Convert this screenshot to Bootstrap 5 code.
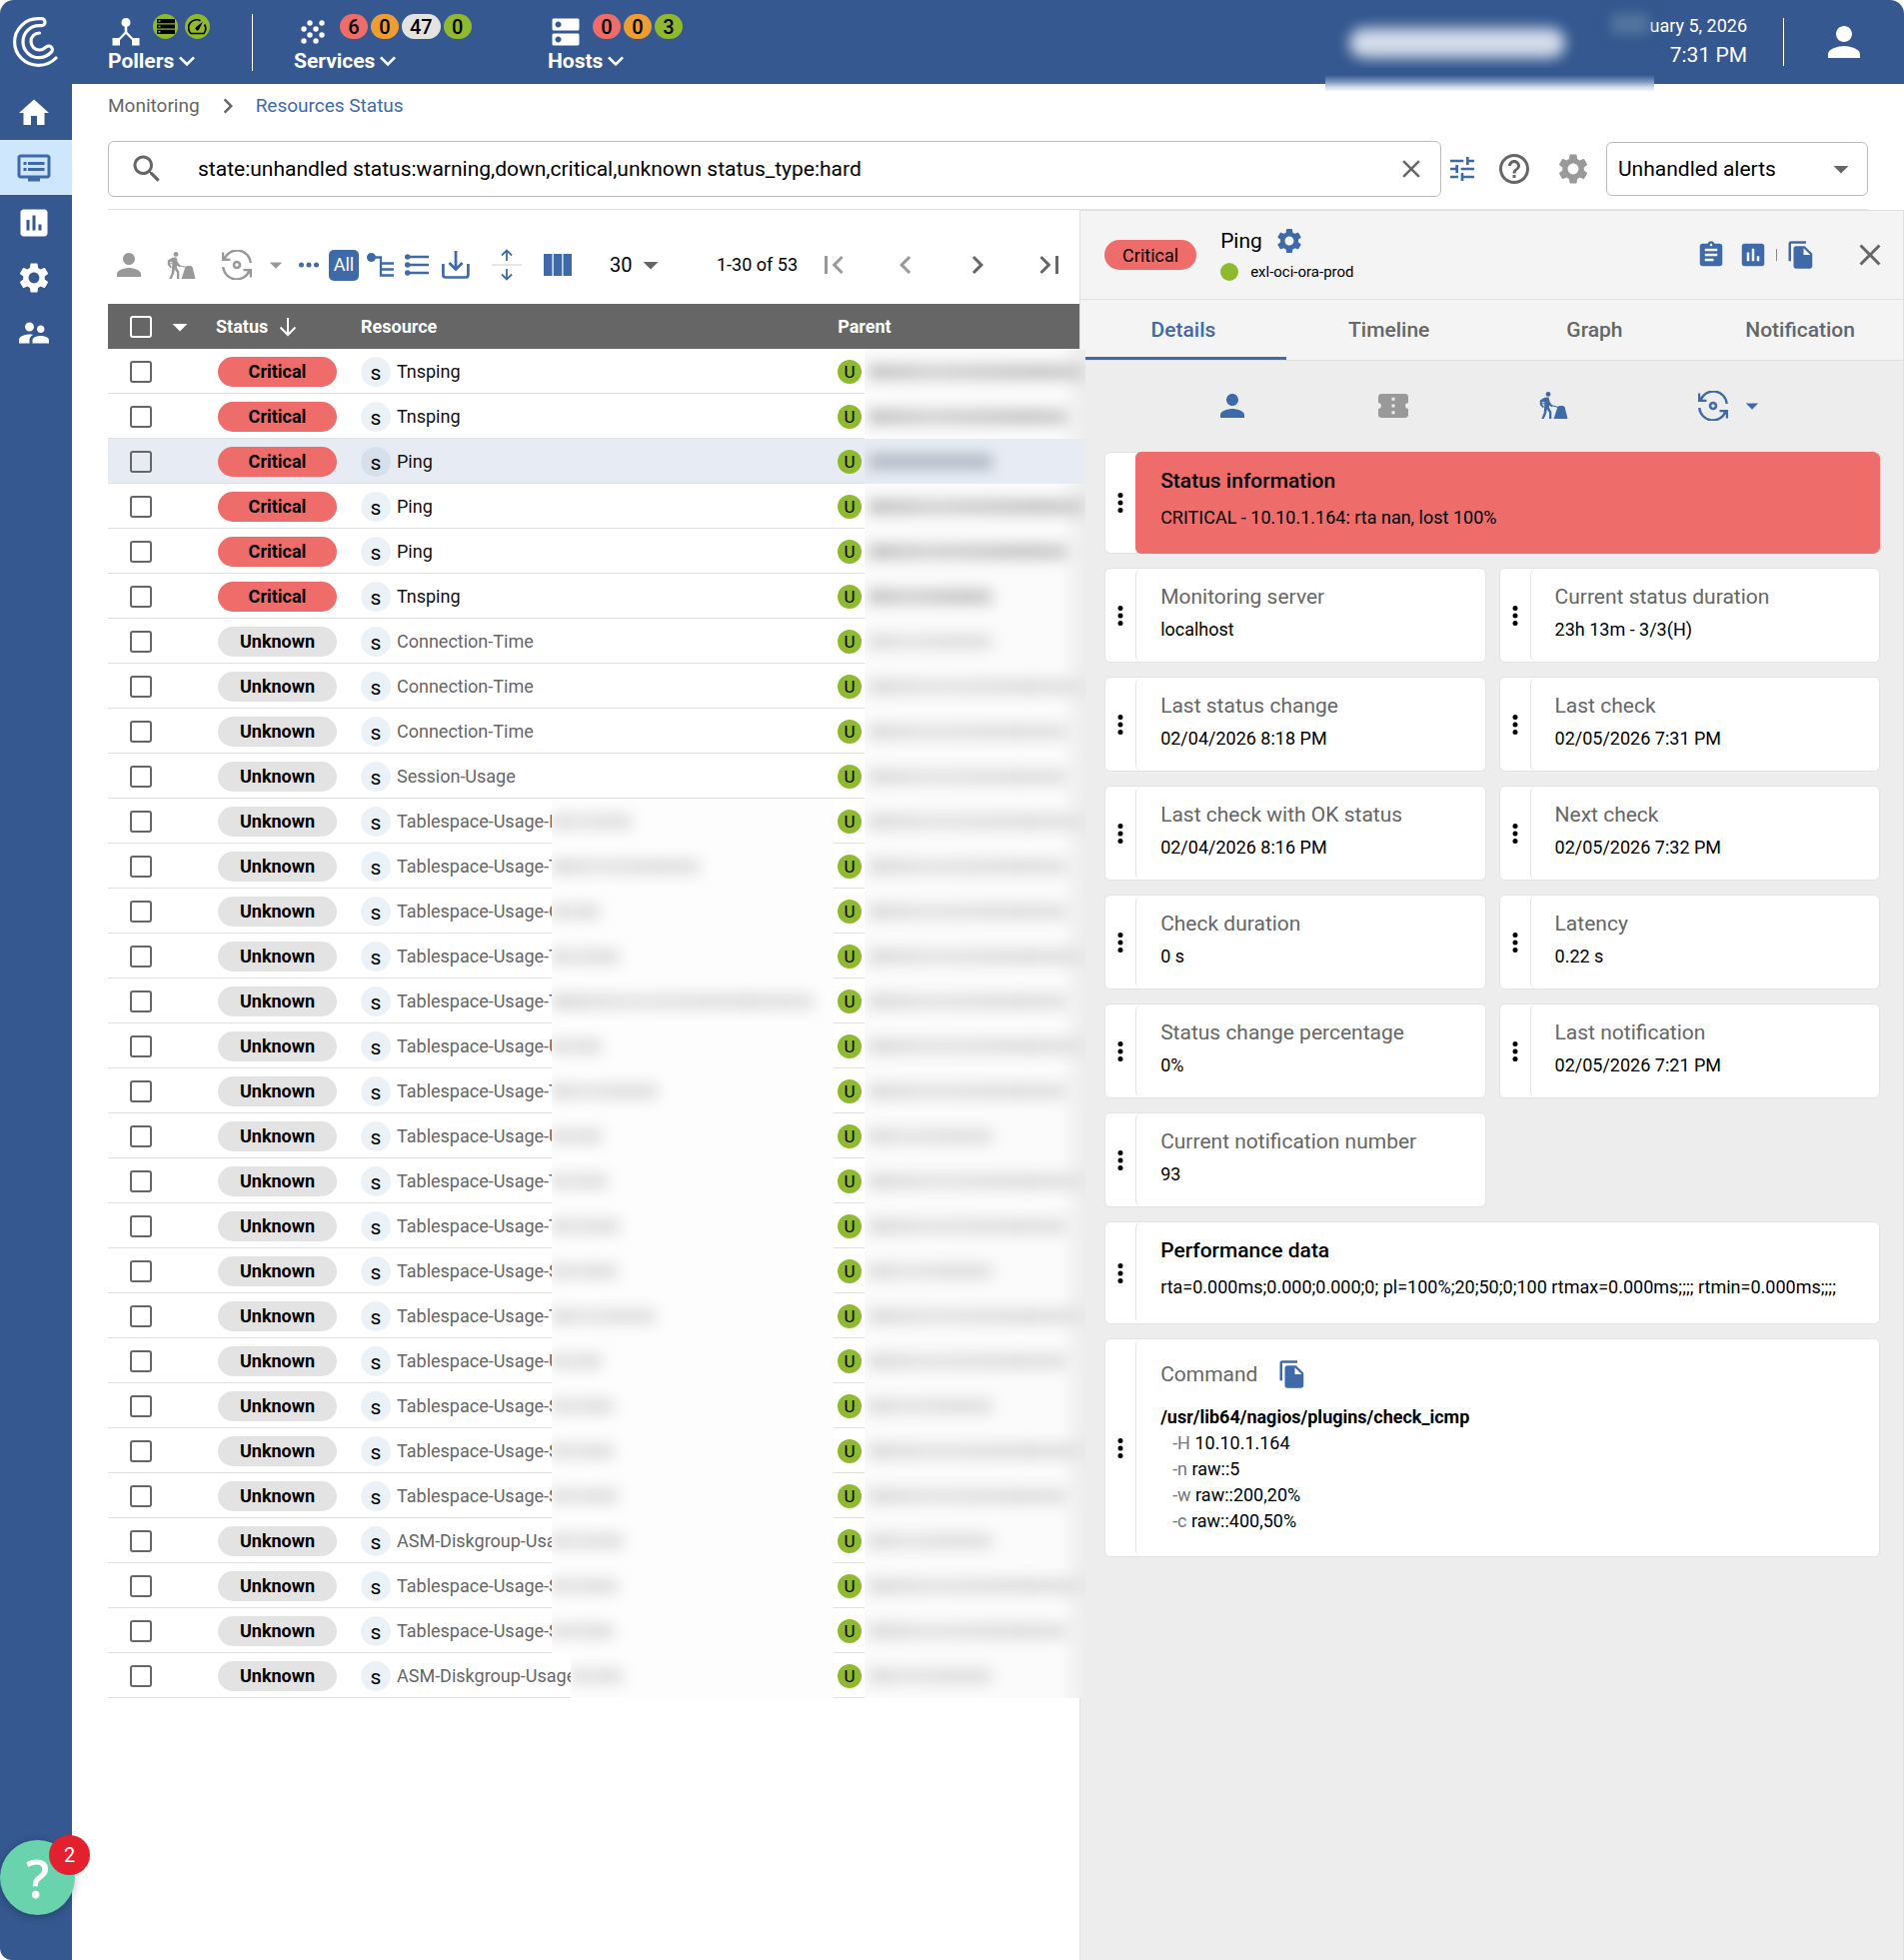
<!DOCTYPE html>
<html lang="en">
<head>
<meta charset="utf-8">
<meta name="viewport" content="width=device-width, initial-scale=1">
<title>Resources Status</title>
<link href="https://cdn.jsdelivr.net/npm/bootstrap@5.3.0/dist/css/bootstrap.min.css" rel="stylesheet">
<style>
:root{--navy:#34588f;--blue:#3f6aa9;--red:#ee6c69;--green:#8fb92f;--orange:#ee9d34;--grey:#e3e3e3;--ink:#666}
body{font-family:Roboto,"Liberation Sans",sans-serif;font-size:18px;line-height:24px;color:#000;background:#fff}
svg{display:block;flex:none;fill:currentColor}
.s24{width:24px;height:24px}.s30{width:30px;height:30px}.s36{width:36px;height:36px}
.icon-btn{display:flex;align-items:center;justify-content:center;padding:0;border:0;background:none;color:var(--blue)}
.icon-btn.dim{color:#999}
.icon-btn.dark{color:var(--ink)}
.topbar{height:84px;background:var(--navy);color:#fff;border-radius:14px 14px 0 0;position:relative}
.brand{width:72px;flex:none;padding-top:17px}
.brand svg{margin:0 auto;width:46px;height:50px}
.group-label{font-size:21px;font-weight:700;color:#fff;text-decoration:none;line-height:24px;height:24px}
.group-label svg{width:32px;height:32px;margin-left:-3px}
.grp-icons{height:35px}
.pill{height:25px;min-width:28px;padding:0 8px;border-radius:13px;color:#000;font-size:20px;line-height:26px;font-weight:500;text-align:center;text-decoration:none}
.rule-v{width:1px;background:#fff}
.disc{width:25px;height:25px;border-radius:50%;background:var(--green);color:#000;display:flex;align-items:center;justify-content:center}
.grp-pollers{width:144px;margin-left:36px;padding-top:14px}
.grp-services{width:254px;margin-left:41px;padding-top:14px}
.grp-hosts{padding-top:14px}
.clock{text-align:right;padding-top:14px;margin-right:36px}
.clock .time{font-size:21px;line-height:34px}
.haze-name{width:216px;height:30px;border-radius:15px;background:#d3dcea;filter:blur(7px)}
.haze-edge{position:absolute;left:1326px;top:68px;width:329px;height:23px;background:linear-gradient(var(--navy) 30%,#7d96bd 60%,#d5deeb 85%,#f4f6fa)}
.haze-month{width:38px;height:20px;background:#54759f;filter:blur(6px)}
.side{width:72px;flex:none;background:var(--navy);position:relative;padding-top:1px;border-radius:0 0 0 12px}
.side a{display:flex;align-items:center;height:55px;padding-left:16px;color:#fff}
.side a.on{background:#cfe7fc;color:var(--blue)}
.help-fab{position:absolute;left:0;bottom:45px;width:75px;height:75px;border:0;border-radius:50%;background:#69d3ae;color:#fff;font:600 52px/75px "Open Sans",sans-serif;padding:0;box-shadow:0 2px 8px rgba(0,0,0,.25)}
.help-count{position:absolute;left:49px;bottom:85px;width:41px;height:40px;border-radius:50%;background:#e5202e;color:#fff;font-size:20px;line-height:40px;text-align:center}
.crumbs{font-size:19px;height:44px;align-items:center;padding:0;gap:21px}
.crumbs a{color:var(--ink);text-decoration:none}
.crumbs a.here{color:var(--blue)}
.search{height:56px;border:1px solid #bbb;border-radius:6px;padding-left:20px;padding-right:11px}
.search input{border:0;outline:0;font-size:21px;color:#000;background:none;min-width:0}
.view-pick{width:262px;height:54px;border:1px solid #bbb;border-radius:6px;font-size:21px;padding:0 0 0 11px;color:#000;background:none;appearance:none}
.pick-wrap{position:relative}
.pick-wrap svg{position:absolute;right:9px;top:9px;color:var(--ink);pointer-events:none}
.head-line{height:1px;background:#e3e3e3}
.tools{height:94px;padding-top:16px}
.all-btn{width:30px;height:31px;border-radius:5px;background:var(--blue);color:#fff;font-size:18px}
.per-page{border:0;background:none;appearance:none;font-size:20px;width:26px;padding:0;color:#000}
.res{table-layout:fixed;width:100%;margin:0;border-collapse:collapse}
.res th{background:#666;color:#fff;font-size:18px;font-weight:700;height:45px;padding:0}
.res td{height:45px;padding:0;background:linear-gradient(#e0e0e0,#e0e0e0) bottom/100% 1px no-repeat}
.res tr.picked td{background-color:#e7ecf4}
.res input{appearance:none;display:block;width:22px;height:22px;margin:0 0 0 22px;border:2px solid #666;border-radius:3px}
.res th input{border-color:#fff}
.status-chip{display:block;width:119px;height:30px;margin-left:2px;border-radius:15px;font-weight:700;line-height:30px;text-align:center;background:var(--grey)}
.status-chip.crit{background:var(--red)}
.s-dot{width:30px;height:30px;border-radius:50%;background:#eaf1f7;line-height:32px;text-align:center;font-size:21px;flex:none;margin-right:6px}
.picked .s-dot{background:#d6dfec}
.u-dot{width:24px;height:24px;border-radius:50%;background:var(--green);line-height:25px;text-align:center;font-size:17px;flex:none}
.r-name{color:var(--ink);white-space:nowrap}
.crit-row .r-name{color:#111}
.clip-a{width:155px;flex:none}.clip-b{width:174px;flex:none}
.haze-res{position:relative;z-index:1;flex:1;height:45px;background:#fdfdfd;display:flex;align-items:center;margin-right:4px;overflow:hidden}
.haze-res i,.haze-par i{height:16px;background:linear-gradient(90deg,#dadada,#e4e4e4 30%,#dedede 75%,#e2e2e2);filter:blur(7px);display:block}
.haze-par{position:relative;z-index:2;height:45px;width:221px;flex:none;margin-left:3px;margin-right:-12px;background:linear-gradient(90deg,#fbfbfb 88%,#ededed);display:flex;align-items:center;overflow:hidden;padding-left:4px}
.crit-row .haze-par i{background:linear-gradient(90deg,#c2c2c2,#d2d2d2 30%,#c6c6c6 80%,#cfcfcf)}
.picked .haze-par{background:#e7ecf4}
.crit-row.picked .haze-par i{background:#b3bac5}
.panel{flex:0 0 45%;background:#ededed;border:1px solid #e0e0e0;border-bottom:0}
.panel-head{height:89px;background:#f4f4f4;border-bottom:1px solid #e0e0e0;padding:0 15px 0 24px}
.big-chip{width:92px;height:30px;border-radius:15px;background:var(--red);line-height:31px;text-align:center}
.p-title{font-size:21px}
.p-host{font-size:15px;margin-top:4px}
.p-host i{width:18px;height:18px;border-radius:50%;background:var(--green)}
.tick{width:1px;height:12px;background:#888}
.tabs{background:#f4f4f4;height:61px;border-bottom:1px solid #e0e0e0}
.tabs button{border:0;background:none;flex:1 1 0;font-size:21px;font-weight:500;color:var(--ink);border-bottom:3px solid transparent;border-top:3px solid transparent}
.tabs button.on{color:var(--blue);border-bottom-color:var(--blue)}
.acts{height:91px;padding-left:72px;padding-right:109px;padding-bottom:2px}
.acts>div{flex:0 0 25%}
.tiles{display:grid;grid-template-columns:1fr 1fr;gap:14px 13px;padding:0 23px 0 24px}
.tile{display:flex;background:#fff;border-radius:6px;min-height:95px;border:1px solid #e3e3e3}
.tile.full{grid-column:1/-1}
.grip{width:30px;flex:none;display:flex;align-items:center;justify-content:center}
.tile-in{flex:1;border-left:1px solid #e3e3e3;border-radius:6px;padding:15px 20px 0 24px;min-width:0}
.tile-in h3{font-size:21px;line-height:26px;font-weight:400;color:var(--ink);margin:0 0 7px}
.tile-in p{margin:0;font-size:18px;line-height:26px}
.tile.full h3{font-weight:500;color:#000;margin-bottom:11px}
.tile.alarm{border-right-color:var(--red)}
.tile.alarm .tile-in{background:var(--red);border-left-color:var(--red);margin:-1px 0;padding-top:16px}
.tile.full .cmd{font-weight:400;color:var(--ink);margin:0}
.cmd-head{height:40px;margin-bottom:10px}
.cmd-path{font-weight:700}
.cmd-args{list-style:none;margin:0;padding:0 0 0 12px}
.cmd-args li{line-height:26px}
.cmd-args span{color:#777}
</style>
</head>
<body class="min-vh-100 d-flex flex-column">
<svg width="0" height="0" class="position-absolute">
<symbol id="person" viewBox="0 0 24 24"><path d="M12 12c2.21 0 4-1.79 4-4s-1.79-4-4-4-4 1.79-4 4 1.79 4 4 4zm0 2c-2.67 0-8 1.34-8 4v2h16v-2c0-2.66-5.33-4-8-4z"/></symbol>
<symbol id="home" viewBox="0 0 24 24"><path d="M10 20v-6h4v6h5v-8h3L12 3 2 12h3v8z"/></symbol>
<symbol id="dvr" viewBox="0 0 24 24"><path d="M21 3H3c-1.1 0-2 .9-2 2v12c0 1.1.9 2 2 2h5v2h8v-2h5c1.1 0 1.99-.9 1.99-2L23 5c0-1.1-.9-2-2-2zm0 14H3V5h18v12zm-2-9H8v2h11V8zm0 4H8v2h11v-2zM7 8H5v2h2V8zm0 4H5v2h2v-2z"/></symbol>
<symbol id="chart" viewBox="0 0 24 24"><path d="M19 3H5c-1.1 0-2 .9-2 2v14c0 1.1.9 2 2 2h14c1.1 0 2-.9 2-2V5c0-1.1-.9-2-2-2zM9 17H7v-7h2v7zm4 0h-2V7h2v10zm4 0h-2v-4h2v4z"/></symbol>
<symbol id="gear" viewBox="0 0 24 24"><path d="M19.14 12.94c.04-.3.06-.61.06-.94 0-.32-.02-.64-.07-.94l2.03-1.58c.18-.14.23-.41.12-.61l-1.92-3.32c-.12-.22-.37-.29-.59-.22l-2.39.96c-.5-.38-1.03-.7-1.62-.94l-.36-2.54c-.04-.24-.24-.41-.48-.41h-3.84c-.24 0-.43.17-.47.41l-.36 2.54c-.59.24-1.13.57-1.62.94l-2.39-.96c-.22-.08-.47 0-.59.22L2.74 8.87c-.12.21-.08.47.12.61l2.03 1.58c-.05.3-.09.63-.09.94s.02.64.07.94l-2.03 1.58c-.18.14-.23.41-.12.61l1.92 3.32c.12.22.37.29.59.22l2.39-.96c.5.38 1.03.7 1.62.94l.36 2.54c.05.24.24.41.48.41h3.84c.24 0 .44-.17.47-.41l.36-2.54c.59-.24 1.13-.56 1.62-.94l2.39.96c.22.08.47 0 .59-.22l1.92-3.32c.12-.22.07-.47-.12-.61l-2.01-1.58zM12 15.6c-1.98 0-3.6-1.62-3.6-3.6s1.62-3.6 3.6-3.6 3.6 1.62 3.6 3.6-1.62 3.6-3.6 3.6z"/></symbol>
<symbol id="people" viewBox="0 0 24 24"><path d="M16.5 12c1.38 0 2.49-1.12 2.49-2.5S17.88 7 16.5 7C15.12 7 14 8.12 14 9.5s1.12 2.5 2.5 2.5zM9 11c1.66 0 2.99-1.34 2.99-3S10.66 5 9 5C7.34 5 6 6.34 6 8s1.34 3 3 3zm7.5 3c-1.83 0-5.5.92-5.5 2.75V19h11v-2.25c0-1.83-3.67-2.75-5.5-2.75zM9 13c-2.33 0-7 1.17-7 3.5V19h7v-2.25c0-.85.33-2.34 2.37-3.47C10.5 13.1 9.66 13 9 13z"/></symbol>
<symbol id="dns" viewBox="0 0 24 24"><path d="M20 13H4c-.55 0-1 .45-1 1v6c0 .55.45 1 1 1h16c.55 0 1-.45 1-1v-6c0-.55-.45-1-1-1zM7 19c-1.1 0-2-.9-2-2s.9-2 2-2 2 .9 2 2-.9 2-2 2zM20 3H4c-.55 0-1 .45-1 1v6c0 .55.45 1 1 1h16c.55 0 1-.45 1-1V4c0-.55-.45-1-1-1zM7 9c-1.1 0-2-.9-2-2s.9-2 2-2 2 .9 2 2-.9 2-2 2z"/></symbol>
<symbol id="hub" viewBox="0 0 28 28"><path d="M14 0a4.500 4.500 0 0 1 1.300 8.800v5.200L21 20h6.500v7.500H20V22l-6-6-6 6v5.500H.5V20H7l5.700-6V8.800A4.500 4.500 0 0 1 14 0z"/></symbol>
<symbol id="grain" viewBox="0 0 24 24"><circle cx="9" cy="3" r="2.700"/><circle cx="21" cy="3" r="2.700"/><circle cx="3" cy="9" r="2.700"/><circle cx="15" cy="9" r="2.700"/><circle cx="9" cy="15" r="2.700"/><circle cx="21" cy="15" r="2.700"/><circle cx="3" cy="21" r="2.700"/><circle cx="15" cy="21" r="2.700"/></symbol>
<symbol id="search" viewBox="0 0 24 24"><path d="M15.500 14h-.79l-.28-.27C15.410 12.590 16 11.110 16 9.500 16 5.910 13.090 3 9.500 3S3 5.910 3 9.500 5.910 16 9.500 16c1.610 0 3.090-.59 4.230-1.570l.27.280v.790l5 4.990L20.490 19l-4.990-5zm-6 0C7.010 14 5 11.990 5 9.500S7.010 5 9.500 5 14 7.010 14 9.500 11.990 14 9.500 14z"/></symbol>
<symbol id="close" viewBox="0 0 24 24"><path d="M19 6.410L17.590 5 12 10.590 6.410 5 5 6.410 10.590 12 5 17.590 6.410 19 12 13.410 17.590 19 19 17.590 13.410 12z"/></symbol>
<symbol id="tune" viewBox="0 0 24 24"><path d="M3 17v2h6v-2H3zM3 5v2h10V5H3zm10 16v-2h8v-2h-8v-2h-2v6h2zM7 9v2H3v2h4v2h2V9H7zm14 4v-2H11v2h10zm-6-4h2V7h4V5h-4V3h-2v6z"/></symbol>
<symbol id="help" viewBox="0 0 24 24"><path d="M11 18h2v-2h-2v2zm1-16C6.480 2 2 6.480 2 12s4.480 10 10 10 10-4.480 10-10S17.520 2 12 2zm0 18c-4.410 0-8-3.590-8-8s3.590-8 8-8 8 3.590 8 8-3.590 8-8 8zm0-14c-2.210 0-4 1.790-4 4h2c0-1.100.9-2 2-2s2 .9 2 2c0 2-3 1.750-3 5h2c0-2.250 3-2.500 3-5 0-2.210-1.790-4-4-4z"/></symbol>
<symbol id="drop" viewBox="0 0 24 24"><path d="M7 10l5 5 5-5z"/></symbol>
<symbol id="right" viewBox="0 0 24 24"><path d="M10 6L8.590 7.410 13.170 12l-4.580 4.590L10 18l6-6z"/></symbol>
<symbol id="left" viewBox="0 0 24 24"><path d="M15.410 7.410L14 6l-6 6 6 6 1.410-1.410L10.830 12z"/></symbol>
<symbol id="first" viewBox="0 0 24 24"><path d="M18.410 16.590L13.820 12l4.590-4.590L17 6l-6 6 6 6zM6 6h2v12H6z"/></symbol>
<symbol id="last" viewBox="0 0 24 24"><path d="M5.590 7.410L10.180 12l-4.590 4.590L7 18l6-6-6-6zM16 6h2v12h-2z"/></symbol>
<symbol id="down" viewBox="0 0 24 24"><path d="M7.410 8.590L12 13.170l4.590-4.580L18 10l-6 6-6-6z"/></symbol>
<symbol id="clip" viewBox="0 0 24 24"><path d="M19 3h-4.180C14.400 1.840 13.300 1 12 1c-1.300 0-2.400.84-2.820 2H5c-1.100 0-2 .9-2 2v14c0 1.100.9 2 2 2h14c1.100 0 2-.9 2-2V5c0-1.100-.9-2-2-2zm-7 0c.55 0 1 .45 1 1s-.45 1-1 1-1-.45-1-1 .45-1 1-1zm2 14H7v-2h7v2zm3-4H7v-2h10v2zm0-4H7V7h10v2z"/></symbol>
<symbol id="copy" viewBox="0 0 24 24"><path d="M16 1H4c-1.100 0-2 .9-2 2v14h2V3h12V1zm-1 4l6 6v10c0 1.100-.9 2-2 2H7.990C6.890 23 6 22.100 6 21l.01-14c0-1.100.89-2 1.990-2h7zm-1 7h5.500L14 6.500V12z"/></symbol>
<symbol id="ticket" viewBox="0 0 24 24"><path d="M22 10V6c0-1.110-.9-2-2-2H4c-1.100 0-1.990.89-1.990 2v4c1.100 0 1.990.9 1.990 2s-.89 2-2 2v4c0 1.100.9 2 2 2h16c1.100 0 2-.9 2-2v-4c-1.100 0-2-.9-2-2s.9-2 2-2zm-9 7.500h-2v-2h2v2zm0-4.500h-2v-2h2v2zm0-4.500h-2v-2h2v2z"/></symbol>
<symbol id="worker" viewBox="0 0 28 27"><circle cx="8.500" cy="2.400" r="2.400"/><path d="M4 6.200Q6 5 9 5.600l1.200 4.600L13 14l-1.200 1.200L9.500 13v3l2.300 4V27H9.500v-6.200L7.300 17.500 6.500 22 4.200 27H1.800L4.200 21 5 10.500 2.600 10v2.500L4.500 15 3.300 16.200.3 13V8.500zM14 27l3.800-11.500Q18.300 14 20 14h3q1.700 0 2.200 1.500L28 27z"/><path d="M3 11.500L19 15.500" stroke="currentColor" stroke-width="1.200"/></symbol>
<symbol id="sync" viewBox="0 0 30 30"><path fill="none" stroke="currentColor" stroke-width="2.400" d="M2.500 9.500A13.500 13.500 0 0 1 28.700 13M1.300 17A13.500 13.500 0 0 0 27.500 20.500"/><path d="M0 2.500V11H8.500V8.700H4.600L2.200 6V2.500zM30 27.500V19H21.500v2.300h3.900L27.800 24v3.500z"/><circle cx="15" cy="15" r="3" fill="none" stroke="currentColor" stroke-width="2.600"/></symbol>
<symbol id="dots-v" viewBox="0 0 6 20"><circle cx="3" cy="2.500" r="2.500"/><circle cx="3" cy="10" r="2.500"/><circle cx="3" cy="17.500" r="2.500"/></symbol>
</svg>

<header class="topbar d-flex">
  <div class="brand"><svg viewBox="0 0 46 50"><path fill="none" stroke="#fff" stroke-width="3.200" stroke-linecap="round" d="M43 41A24 23.500 0 0 1 25 48.300A23.400 23.300 0 0 1 25 1.700H28.500a3.500 3.500 0 0 1 0 7H26A16 16 0 0 0 26 40.700C32 40.700 35 38.500 38 35.500A3.600 3.600 0 0 0 33.500 29.800C31 32 29 33 26.500 33A8.500 8.500 0 0 1 26.500 16"/></svg></div>
  <div class="grp-pollers">
    <div class="grp-icons d-flex"><svg class="mt-1 ms-1" width="28" height="28"><use href="#hub"/></svg>
      <span class="disc" style="margin-left:13px"><svg width="18" height="15" viewBox="0 0 18 15"><path d="M0 0h18v4.200H0zM0 5.400h18v4.200H0zM0 10.800h18V15H0z"/><path fill="#8fb92f" d="M1.500 1.300h2v1.500h-2zM1.500 6.700h2v1.500h-2zM1.500 12.100h2v1.500h-2z"/></svg></span>
      <span class="disc" style="margin-left:7px"><svg width="19" height="16" viewBox="0 0 19 16"><path fill="none" stroke="#000" stroke-width="1.700" d="M12.500 1.800A8 8 0 0 0 3 14.500h13A8 8 0 0 0 16.600 5.500"/><path d="M15 2.800l-3.800 7.400a1.900 1.900 0 1 1-3-2.200z"/></svg></span></div>
    <a href="#" class="group-label d-flex align-items-center">Pollers<svg><use href="#down"/></svg></a>
  </div>
  <div class="rule-v" style="margin:14px 0 13px"></div>
  <div class="grp-services">
    <div class="grp-icons d-flex"><svg class="s24" style="margin:6px 15px 0 7px"><use href="#grain"/></svg>
      <div class="d-flex" style="gap:3px"><a href="#" class="pill" style="background:var(--red)">6</a><a href="#" class="pill" style="background:var(--orange)">0</a><a href="#" class="pill" style="background:#e3e3e3">47</a><a href="#" class="pill" style="background:var(--green)">0</a></div></div>
    <a href="#" class="group-label d-flex align-items-center">Services<svg><use href="#down"/></svg></a>
  </div>
  <div class="grp-hosts">
    <div class="grp-icons d-flex"><svg class="s36" style="margin:0 9px 0 0"><use href="#dns"/></svg>
      <div class="d-flex" style="gap:3px"><a href="#" class="pill" style="background:var(--red)">0</a><a href="#" class="pill" style="background:var(--orange)">0</a><a href="#" class="pill" style="background:var(--green)">3</a></div></div>
    <a href="#" class="group-label d-flex align-items-center">Hosts<svg><use href="#down"/></svg></a>
  </div>
  <div class="ms-auto d-flex">
    <div class="haze-name" style="margin:28px 46px 0 0"></div>
    <div class="clock"><div class="d-flex justify-content-end"><div class="haze-month"></div><div>uary 5, 2026</div></div><div class="time">7:31 PM</div></div>
    <div class="rule-v" style="margin:18px 0"></div>
    <button class="icon-btn text-white" aria-label="Account" style="margin:0 36px"><svg width="48" height="48"><use href="#person"/></svg></button>
  </div>
  <div class="haze-edge"></div>
</header>

<div class="d-flex flex-grow-1">
  <nav class="side" aria-label="Main">
    <a href="#" aria-label="Home"><svg class="s36"><use href="#home"/></svg></a>
    <a href="#" class="on" aria-label="Monitoring"><svg class="s36"><use href="#dvr"/></svg></a>
    <a href="#" aria-label="Reporting"><svg class="s36"><use href="#chart"/></svg></a>
    <a href="#" aria-label="Configuration"><svg class="s36"><use href="#gear"/></svg></a>
    <a href="#" aria-label="Administration"><svg class="s36"><use href="#people"/></svg></a>
    <button class="help-fab" aria-label="Help">?</button>
    <span class="help-count">2</span>
  </nav>
  <main class="flex-grow-1 d-flex flex-column" style="min-width:0">
    <div style="padding:0 36px">
      <nav aria-label="breadcrumb"><div class="crumbs d-flex"><a href="#">Monitoring</a><svg class="s30" style="margin:0 -8px;color:#666"><use href="#right"/></svg><a href="#" class="here">Resources Status</a></div></nav>
      <div class="d-flex align-items-center" style="padding-top:13px;padding-bottom:12px">
        <div class="search d-flex align-items-center flex-grow-1">
          <svg class="s36" style="color:#666"><use href="#search"/></svg>
          <input type="text" aria-label="Search" class="flex-grow-1" style="margin-left:31px" value="state:unhandled status:warning,down,critical,unknown status_type:hard">
          <button class="icon-btn dark" aria-label="Clear"><svg class="s36" style="padding:3px"><use href="#close"/></svg></button>
        </div>
        <button class="icon-btn" aria-label="Criteria" style="margin-left:5px"><svg width="32" height="32"><use href="#tune"/></svg></button>
        <button class="icon-btn dark" aria-label="Search help" style="margin-left:18px"><svg class="s36"><use href="#help"/></svg></button>
        <button class="icon-btn dim" aria-label="Filters" style="margin:0 15px 0 23px"><svg class="s36"><use href="#gear"/></svg></button>
        <div class="pick-wrap"><select class="view-pick" aria-label="Filter"><option>Unhandled alerts</option></select><svg class="s36"><use href="#drop"/></svg></div>
      </div>
      <div class="head-line"></div>
    </div>
    <div class="d-flex flex-grow-1">
      <section class="flex-grow-1" style="min-width:0;padding-left:36px">
        <div class="tools d-flex align-items-center">
          <button class="icon-btn dim" aria-label="Acknowledge" style="margin-left:3px"><svg class="s36"><use href="#person"/></svg></button>
          <button class="icon-btn dim" aria-label="Set downtime" style="margin-left:20px"><svg width="29" height="27"><use href="#worker"/></svg></button>
          <button class="icon-btn dim" aria-label="Check" style="margin-left:26px"><svg class="s30"><use href="#sync"/></svg></button>
          <button class="icon-btn dim" aria-label="Check options" style="margin-left:9px"><svg class="s30"><use href="#drop"/></svg></button>
          <button class="icon-btn" aria-label="More" style="margin-left:8px"><svg width="20" height="6" viewBox="0 0 20 6"><circle cx="2.500" cy="3" r="2.500"/><circle cx="10" cy="3" r="2.500"/><circle cx="17.500" cy="3" r="2.500"/></svg></button>
          <button class="icon-btn all-btn" style="margin-left:10px">All</button>
          <button class="icon-btn" aria-label="View by host" style="margin-left:8px"><svg width="27" height="24" viewBox="0 0 27 24"><circle cx="4.500" cy="4.500" r="4.500"/><path fill="none" stroke="currentColor" stroke-width="2.300" d="M8 4.500h6V22.500h13M14 10.500h13M14 16.500h13"/></svg></button>
          <button class="icon-btn" aria-label="View by service" style="margin-left:11px"><svg width="24" height="22" viewBox="0 0 24 22"><path fill="none" stroke="currentColor" stroke-width="2.400" d="M2 3h22M2 11h22M2 19h22"/><circle cx="2.700" cy="3" r="2.700"/><circle cx="2.700" cy="11" r="2.700"/><circle cx="2.700" cy="19" r="2.700"/></svg></button>
          <button class="icon-btn" aria-label="Export" style="margin-left:13px"><svg width="28" height="28" viewBox="0 0 28 28"><path fill="none" stroke="currentColor" stroke-width="2.700" d="M1.400 13v11c0 1.500 1 2.500 2.500 2.500h20c1.500 0 2.500-1 2.500-2.500V13M14 0v18M7.500 12l6.500 6.500 6.500-6.500"/></svg></button>
          <button class="icon-btn" aria-label="Row height" style="margin-left:22px"><svg width="30" height="32" viewBox="0 0 30 32"><path stroke="#ddd" stroke-width="1.500" d="M0 16h30"/><path fill="none" stroke="currentColor" stroke-width="1.800" d="M15 12V2M10 6.500l5-5 5 5M15 20v10M10 25.500l5 5 5-5"/></svg></button>
          <button class="icon-btn" aria-label="Columns" style="margin-left:22px"><svg width="28" height="22" viewBox="0 0 28 22"><path d="M0 0h8.500v22H0zM9.800 0h8.500v22H9.800zM19.500 0H28v22h-8.500z"/></svg></button>
          <select class="per-page" aria-label="Rows per page" style="margin-left:38px"><option>30</option></select><svg class="s36" style="color:#666;margin-left:-3px"><use href="#drop"/></svg>
          <span class="text-nowrap" style="margin-left:48px">1-30 of 53</span>
          <button class="icon-btn dim" aria-label="First page" style="margin-left:18px"><svg class="s36"><use href="#first"/></svg></button>
          <button class="icon-btn dim" aria-label="Previous page" style="margin-left:36px"><svg class="s36"><use href="#left"/></svg></button>
          <button class="icon-btn dark" aria-label="Next page" style="margin-left:36px"><svg class="s36"><use href="#right"/></svg></button>
          <button class="icon-btn dark" aria-label="Last page" style="margin-left:36px"><svg class="s36"><use href="#last"/></svg></button>
        </div>
        <table class="res">
          <colgroup><col style="width:108px"><col style="width:145px"><col><col style="width:242px"></colgroup>
          <thead><tr>
            <th scope="col"><div class="d-flex align-items-center"><input type="checkbox" aria-label="Select all"><svg class="s36" style="margin-left:10px"><use href="#drop"/></svg></div></th>
            <th scope="col"><div class="d-flex align-items-center">Status<svg width="18" height="20" viewBox="0 0 18 20" style="margin-left:11px"><path fill="none" stroke="#fff" stroke-width="2" d="M9 1v17M1.500 10.500L9 18l7.500-7.500"/></svg></div></th>
            <th scope="col">Resource</th><th scope="col">Parent</th></tr></thead>
          <tbody id="rows"></tbody>
        </table>
      </section>
      <aside class="panel">
        <div class="panel-head d-flex align-items-center">
          <div class="big-chip">Critical</div>
          <div style="margin-left:24px">
            <div class="p-title d-flex align-items-center">Ping<button class="icon-btn" aria-label="Configure" style="margin-left:12px"><svg class="s30"><use href="#gear"/></svg></button></div>
            <div class="p-host d-flex align-items-center"><i></i><span style="margin-left:12px">exl-oci-ora-prod</span></div>
          </div>
          <div class="ms-auto d-flex align-items-center">
            <button class="icon-btn" aria-label="Logs"><svg class="s30"><use href="#clip"/></svg></button>
            <button class="icon-btn" aria-label="Report" style="margin:0 8px 0 12px"><svg class="s30"><use href="#chart"/></svg></button>
            <span class="tick"></span>
            <button class="icon-btn" aria-label="Copy link" style="margin:0 36px 0 9px"><svg class="s30"><use href="#copy"/></svg></button>
            <button class="icon-btn dark" aria-label="Close"><svg class="s36"><use href="#close"/></svg></button>
          </div>
        </div>
        <div class="tabs d-flex" role="tablist"><button role="tab" class="on">Details</button><button role="tab">Timeline</button><button role="tab">Graph</button><button role="tab">Notification</button></div>
        <div class="acts d-flex align-items-center">
          <div><button class="icon-btn mx-auto" aria-label="Acknowledge"><svg class="s36"><use href="#person"/></svg></button></div>
          <div><button class="icon-btn dim mx-auto" aria-label="Ticket"><svg class="s36"><use href="#ticket"/></svg></button></div>
          <div><button class="icon-btn mx-auto" aria-label="Downtime"><svg width="29" height="27"><use href="#worker"/></svg></button></div>
          <div class="d-flex" style="padding-left:65px"><button class="icon-btn" aria-label="Check"><svg class="s30"><use href="#sync"/></svg></button><button class="icon-btn" aria-label="Check options" style="margin-left:9px"><svg class="s30"><use href="#drop"/></svg></button></div>
        </div>
        <div class="tiles" id="tiles"></div>
      </aside>
    </div>
  </main>
</div>
<script src="https://cdn.jsdelivr.net/npm/bootstrap@5.3.0/dist/js/bootstrap.bundle.min.js"></script>
<script>
// [resource, parent width, resource haze width]
const T = 'Tablespace-Usage-', A = 'ASM-Diskgroup-Usage', C = 'Connection-Time', F = 216, M = 200, S = 124;
const data = [
  ['Tnsping', F], ['Tnsping', M], ['Ping', S], ['Ping', F], ['Ping', M], ['Tnsping', S],
  [C, S], [C, F], [C, M], ['Session-Usage', M],
  [T + 'I', F, 80], [T + 'T', M, 148], [T + 'O', M, 48], [T + 'T', F, 68], [T + 'T', M, 262], [T + 'U', F, 50],
  [T + 'T', M, 106], [T + 'U', S, 50], [T + 'T', F, 56], [T + 'T', M, 68], [T + 'S', S, 66], [T + 'T', F, 104],
  [T + 'U', M, 50], [T + 'S', S, 62], [T + 'S', F, 62], [T + 'S', M, 66], [A, S, 72], [T + 'S', F, 66], [T + 'S', M, 62], [A, S, 52, 'clip-b']
];
document.getElementById('rows').innerHTML = data.map(([name, pw, rw, clip], i) => {
  const crit = i < 6;
  return `<tr class="${crit ? 'crit-row' : ''}${i === 2 ? ' picked' : ''}">
<td><input type="checkbox" aria-label="Select row ${i + 1}"></td>
<td><span class="status-chip${crit ? ' crit' : ''}">${crit ? 'Critical' : 'Unknown'}</span></td>
<td><div class="d-flex align-items-center"><span class="s-dot">s</span><span class="r-name${rw ? ' ' + (clip || 'clip-a') : ''}">${name}</span>${rw ? `<span class="haze-res"><i style="width:${rw}px"></i></span>` : ''}</div></td>
<td><div class="d-flex align-items-center"><span class="u-dot">U</span><span class="haze-par"><i style="width:${pw}px"></i></span></div></td></tr>`;
}).join('');

const grip = '<div class="grip"><svg width="6" height="20"><use href="#dots-v"/></svg></div>';
const tile = (t, v) => `<div class="tile">${grip}<div class="tile-in"><h3>${t}</h3><p>${v}</p></div></div>`;
document.getElementById('tiles').innerHTML =
  `<div class="tile full alarm" style="min-height:102px">${grip}<div class="tile-in"><h3>Status information</h3><p>CRITICAL - 10.10.1.164: rta nan, lost 100%</p></div></div>` +
  [['Monitoring server', 'localhost'], ['Current status duration', '23h 13m - 3/3(H)'],
   ['Last status change', '02/04/2026 8:18 PM'], ['Last check', '02/05/2026 7:31 PM'],
   ['Last check with OK status', '02/04/2026 8:16 PM'], ['Next check', '02/05/2026 7:32 PM'],
   ['Check duration', '0 s'], ['Latency', '0.22 s'],
   ['Status change percentage', '0%'], ['Last notification', '02/05/2026 7:21 PM'],
   ['Current notification number', '93']].map(a => tile(...a)).join('') +
  `<div class="tile full" style="min-height:103px">${grip}<div class="tile-in"><h3>Performance data</h3><p>rta=0.000ms;0.000;0.000;0; pl=100%;20;50;0;100 rtmax=0.000ms;;;; rtmin=0.000ms;;;;</p></div></div>` +
  `<div class="tile full" style="min-height:219px">${grip}<div class="tile-in"><div class="cmd-head d-flex align-items-center"><h3 class="cmd">Command</h3><button class="icon-btn" aria-label="Copy command" style="margin-left:20px"><svg class="s30"><use href="#copy"/></svg></button></div><p class="cmd-path">/usr/lib64/nagios/plugins/check_icmp</p><ul class="cmd-args"><li><span>-H</span> 10.10.1.164</li><li><span>-n</span> raw::5</li><li><span>-w</span> raw::200,20%</li><li><span>-c</span> raw::400,50%</li></ul></div></div>`;
</script>
</body>
</html>
